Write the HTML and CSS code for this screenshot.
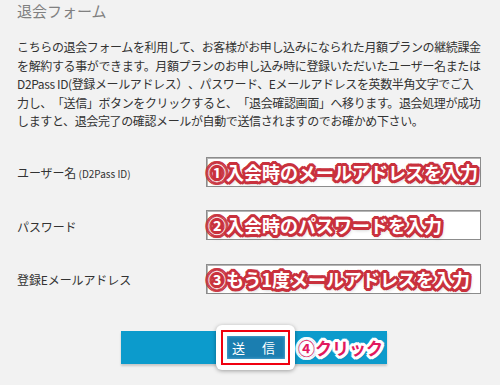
FILE: index.html
```html
<!DOCTYPE html>
<html lang="ja">
<head>
<meta charset="utf-8">
<title>退会フォーム</title>
<link rel="stylesheet" href="styles.css">
</head>
<body>
<div class="page">
  <h1 class="title">退会フォーム</h1>
  <p class="intro">こちらの退会フォームを利用して、お客様がお申し込みになられた月額プランの継続課金<br>を解約する事ができます。月額プランのお申し込み時に登録いただいたユーザー名または<br>D2Pass ID(登録メールアドレス）、パスワード、Eメールアドレスを英数半角文字でご入<br>力し、「送信」ボタンをクリックすると、「退会確認画面」へ移ります。退会処理が成功<br>しますと、退会完了の確認メールが自動で送信されますのでお確かめ下さい。</p>
  <div class="form">
    <div class="label">ユーザー名<span class="sub"> (D2Pass ID)</span></div>
    <div class="field"><span class="note">①入会時のメールアドレスを入力</span></div>
    <div class="label">パスワード</div>
    <div class="field"><span class="note">②入会時のパスワードを入力</span></div>
    <div class="label">登録Eメールアドレス</div>
    <div class="field"><span class="note">③もう1度メールアドレスを入力</span></div>
  </div>
  <div class="submit-row">
    <div class="submit-bar">
      <div class="btn-glow">
        <div class="btn-frame">
          <div class="btn">送　信</div>
        </div>
      </div>
      <span class="click-note">④クリック</span>
    </div>
  </div>
</div>
</body>
</html>
```
FILE: styles.css
```css
html, body {
  margin: 0;
  padding: 0;
  background: #f2f2f2;
}
body {
  width: 500px;
  height: 385px;
  overflow: hidden;
  font-family: "Noto Sans CJK JP", "Noto Sans", sans-serif;
  color: #333;
  text-spacing-trim: space-all;
}
.page {
  padding: 0 17px;
}
.title {
  margin: 0;
  font-size: 15px;
  font-weight: normal;
  line-height: 22px;
  color: #808080;
  letter-spacing: 0;
}
.intro {
  margin: 16px 0 0;
  font-size: 12px;
  line-height: 18.5px;
  letter-spacing: -0.375px;
  white-space: nowrap;
}
.form {
  margin-top: 26px;
  display: grid;
  grid-template-columns: 189px 275px;
  grid-auto-rows: 30px;
  row-gap: 23.5px;
  align-items: center;
}
.label {
  font-size: 12px;
  letter-spacing: -0.1px;
  padding-top: 2px;
}
.sub {
  font-size: 10px;
  letter-spacing: 0;
}
.field {
  height: 30px;
  box-sizing: border-box;
  background: #fff;
  border: 1px solid #8c8c8c;
  box-shadow: inset 1px 1px 0 #b5b5b5;
  display: flex;
  align-items: center;
  padding-left: 1px;
  overflow: visible;
}
.note {
  font-size: 18px;
  font-weight: bold;
  line-height: 1;
  color: #fff;
  white-space: nowrap;
  text-shadow:
    2px 0 0 #c9313d, -2px 0 0 #c9313d, 0 2px 0 #c9313d, 0 -2px 0 #c9313d,
    2px 2px 0 #c9313d, -2px -2px 0 #c9313d, 2px -2px 0 #c9313d, -2px 2px 0 #c9313d,
    3px 1px 0 #c9313d, -3px 1px 0 #c9313d, 3px -1px 0 #c9313d, -3px -1px 0 #c9313d,
    1px 3px 0 #c9313d, -1px 3px 0 #c9313d, 1px -3px 0 #c9313d, -1px -3px 0 #c9313d,
    1px 2px 4px rgba(0, 0, 0, 0.45);
}
.submit-row {
  margin-top: 37px;
  padding-left: 104px;
}
.submit-bar {
  width: 266px;
  height: 33px;
  background: #0c9bcc;
  box-shadow: 0 2px 2px rgba(0, 0, 0, 0.18);
  display: flex;
  align-items: center;
  padding-left: 95px;
  box-sizing: border-box;
}
.btn-glow {
  padding: 5px;
  background: #fff;
  border-radius: 6px;
  box-shadow: 0 1px 4px rgba(0, 0, 0, 0.35);
  flex: none;
}
.btn-frame {
  border: 2px solid #f00010;
  padding: 4px 3px 4px 4px;
}
.btn {
  width: 58px;
  height: 23px;
  box-sizing: border-box;
  padding-left: 5px;
  background: #1b7eb0;
  box-shadow: inset 0 0 3px rgba(120, 190, 230, 0.9);
  color: #fff;
  font-size: 13px;
  line-height: 23px;
  letter-spacing: 2px;
  white-space: nowrap;
}
.click-note {
  margin-left: 3px;
  font-size: 17px;
  font-weight: bold;
  line-height: 1;
  color: #e2195e;
  white-space: nowrap;
  text-shadow:
    2px 0 0 #fff, -2px 0 0 #fff, 0 2px 0 #fff, 0 -2px 0 #fff,
    2px 2px 0 #fff, -2px -2px 0 #fff, 2px -2px 0 #fff, -2px 2px 0 #fff,
    3px 1px 0 #fff, -3px 1px 0 #fff, 3px -1px 0 #fff, -3px -1px 0 #fff,
    1px 3px 0 #fff, -1px 3px 0 #fff, 1px -3px 0 #fff, -1px -3px 0 #fff,
    1px 2px 3px rgba(0, 0, 0, 0.35);
}
```
